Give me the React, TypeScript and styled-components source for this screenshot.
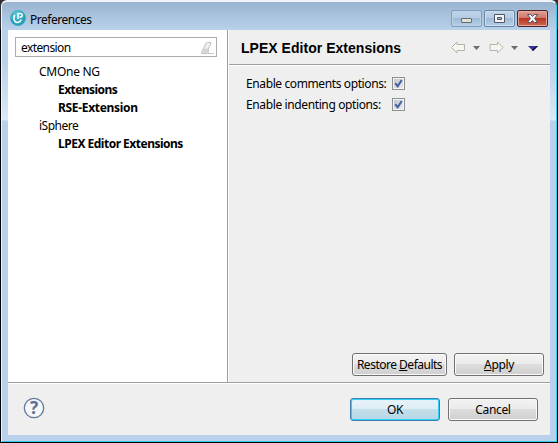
import React from 'react';
import styled, { createGlobalStyle, css } from 'styled-components';

const GlobalStyle = createGlobalStyle`
  * { box-sizing: border-box; }
  html, body { margin: 0; padding: 0; background: #000; overflow: hidden; }
  body { font-family: "Noto Sans", "Open Sans", sans-serif; font-size: 12px; color: #000; }
  button, input { font: inherit; color: inherit; }
`;

const Desktop = styled.div`
  width: 558px;
  height: 443px;
  padding: 0 1px 1px;
  background: linear-gradient(#333038 0, #333038 28px, #000 30px);
`;

const WindowFrame = styled.div`
  display: flex;
  flex-direction: column;
  width: 556px;
  height: 442px;
  padding: 0 6px 6px;
  border: 1px solid #f4f8fc;
  border-top: 2px solid #f0f5fa;
  border-right-color: #30cbe8;
  border-bottom-color: #30cbe8;
  border-radius: 6px 6px 0 0;
  background: linear-gradient(#99b4d1 0, #b9d1ea 28px, #b9d1ea 60px, #dce9f6 118px, #b9d1ea 119px);
`;

const TitleBar = styled.header`
  display: flex;
  flex: none;
  align-items: flex-start;
  height: 28px;
  padding: 8px 2px 0 2px;
`;

const AppIcon = styled.svg`
  width: 16px;
  height: 16px;
  margin-right: 4px;
`;

const Label = styled.span<{ $spacing?: number; $bold?: boolean }>`
  line-height: 18px;
  white-space: pre;
  letter-spacing: ${p => p.$spacing ?? -0.35}px;
  font-weight: ${p => (p.$bold ? 700 : 400)};
`;

const WindowTitle = styled(Label)`
  padding-top: 1px;
`;

const WindowControls = styled.div`
  display: flex;
  gap: 2px;
  margin-left: auto;
`;

const ControlButton = styled.button<{ $kind: 'minimize' | 'maximize' | 'close' }>`
  display: grid;
  place-items: center;
  width: 31px;
  height: 17px;
  padding: 0;
  border-radius: 2px;
  border: 1px solid #6c83a3;
  background: linear-gradient(#c0d5e9 0, #b4cce4 45%, #9dbad7 50%, #b4d0e9 100%);
  box-shadow: inset 0 0 0 1px #cbdff0;
  ${p => p.$kind === 'minimize' && css`border-color: #849fbe; box-shadow: inset 0 0 0 1px #b8cee4;`}
  ${p => p.$kind === 'close' && css`
    border-color: #4c2331;
    background: linear-gradient(#dda096 0, #cf7869 45%, #b93624 50%, #cc694d 100%);
    box-shadow: inset 0 0 0 1px #e5a89b;
  `}
  svg { display: block; }
`;

const Client = styled.main`
  display: flex;
  flex: 1;
  flex-direction: column;
  min-height: 0;
  background: #efefef;
`;

const Body = styled.div`
  display: flex;
  flex: none;
  height: 353px;
  border-bottom: 1px solid #a0a0a0;
`;

const Navigation = styled.aside`
  width: 220px;
  padding: 7px 10px 0 7px;
  background: #fff;
  border-right: 1px solid #a0a0a0;
`;

const Filter = styled.div`
  display: flex;
  align-items: center;
  width: 202px;
  height: 20px;
  padding: 1px 2px 0 5px;
  border: 1px solid #abadb3;
  svg { margin-left: auto; }
`;

const Tree = styled.div`
  display: flex;
  flex-direction: column;
  padding-top: 6px;
`;

const TreeItem = styled.div<{ $nested?: boolean }>`
  display: flex;
  height: 18px;
  padding-left: ${p => (p.$nested ? 43 : 24)}px;
`;

const Page = styled.section`
  display: flex;
  flex: 1;
  flex-direction: column;
  border-left: 1px solid #fff;
`;

const PageHeader = styled.div`
  display: flex;
  align-items: center;
  height: 36px;
  padding: 0 12px 0 12px;
  border-bottom: 1px solid #fff;
  box-shadow: inset 0 -1px #a0a0a0;
`;

const PageTitle = styled.h1`
  margin: 0;
  padding-top: 2px;
  font: bold 14px/21px "Liberation Sans", Arial, sans-serif;
  letter-spacing: 0.03px;
  white-space: nowrap;
`;

const HistoryIcons = styled.svg`
  width: 90px;
  height: 13px;
  margin-left: auto;
`;

const Options = styled.div`
  display: grid;
  grid-template-columns: 146px 13px;
  grid-auto-rows: 18px;
  row-gap: 3px;
  align-items: center;
  padding: 9px 0 0 17px;
`;

const Checkbox = styled.button`
  width: 13px;
  height: 13px;
  margin-top: -1px;
  padding: 1px;
  border: 1px solid #8e8f8f;
  background: linear-gradient(135deg, #bcc3cc, #eceef0);
  box-shadow: inset 0 0 0 1px #f4f4f4;
  svg { display: block; }
`;

const Actions = styled.div`
  display: flex;
  gap: 7px;
  justify-content: flex-end;
  margin-top: auto;
  padding: 0 6px 6px 0;
`;

const PushButton = styled.button<{ $width?: number; $primary?: boolean }>`
  width: ${p => p.$width ?? 90}px;
  height: 23px;
  padding: 0;
  border: 1px solid #707070;
  border-radius: 3px;
  background: linear-gradient(#f2f2f2 0, #ebebeb 48%, #dddddd 50%, #cfcfcf 100%);
  box-shadow: inset 0 0 0 1px #fafafa;
  display: flex;
  align-items: center;
  justify-content: center;
  u { text-underline-offset: 1px; text-decoration-thickness: 1px; }
  ${p => p.$primary && css`
    border-color: #3c7fb1;
    background: linear-gradient(#eaf4f9 0, #dceef6 48%, #c5dfea 50%, #b6d6e4 100%);
    box-shadow: inset 0 0 0 1px #32cff4, inset 0 0 1px 1px #9de5f7;
  `}
`;

const Footer = styled.footer`
  display: flex;
  flex: 1;
  align-items: flex-start;
  gap: 8px;
  padding: 14px 12px 0 15px;
  border-top: 1px solid #fff;
`;

const HelpIcon = styled.svg`
  width: 22px;
  height: 22px;
  margin-top: -1px;
  margin-right: auto;
  text { font: bold 17px "Noto Sans", sans-serif; }
`;

const tree = [
  { name: 'CMOne NG', spacing: -0.28 },
  { name: 'Extensions', nested: true, spacing: -0.56 },
  { name: 'RSE-Extension', nested: true, spacing: -0.32 },
  { name: 'iSphere', spacing: -0.48 },
  { name: 'LPEX Editor Extensions', nested: true, spacing: -0.5 },
];

function Check() {
  return (
    <Checkbox role="checkbox" aria-checked="true">
      <svg width="9" height="9" viewBox="0 0 9 9">
        <path d="M1.2 4.2 3.7 7.2 7.7 1" fill="none" stroke="#4560a0" strokeWidth="2" />
      </svg>
    </Checkbox>
  );
}

export default function App() {
  return (
    <>
      <GlobalStyle />
      <Desktop>
        <WindowFrame>
          <TitleBar>
            <AppIcon viewBox="0 0 16 16">
              <defs>
                <radialGradient id="orb" cx=".4" cy=".25">
                  <stop stopColor="#59c7d5" /><stop offset="1" stopColor="#2aa3ba" />
                </radialGradient>
              </defs>
              <circle cx="8" cy="8" r="7.9" fill="url(#orb)" />
              <path d="M4.9 5C3.7 6.8 3.7 9.6 4.9 11.2c1.6 2 5.2 1.6 6.4-1.7M8 9V3.5h2.6c2.3 0 2.3 3.5 0 3.5H9.4" fill="none" stroke="#fff" strokeWidth="1.5" />
            </AppIcon>
            <WindowTitle $spacing={-0.47}>Preferences</WindowTitle>
            <WindowControls>
              <ControlButton $kind="minimize" aria-label="Minimize">
                <svg width="13" height="11" viewBox="0 0 13 11"><rect x="1.5" y="5.5" width="10" height="4" rx=".5" fill="#e1e1d8" stroke="#656970" /></svg>
              </ControlButton>
              <ControlButton $kind="maximize" aria-label="Maximize">
                <svg width="13" height="11" viewBox="0 0 13 11"><path d="M1.5 1.5h10v8h-10z" fill="#f5f5f4" stroke="#51566a" /><path d="M4.5 4.5h4v2h-4z" fill="#94b6d7" stroke="#51566a" /></svg>
              </ControlButton>
              <ControlButton $kind="close" aria-label="Close">
                <svg width="13" height="11" viewBox="0 0 13 11"><path d="M1.5 1.5h3l2 2 2-2h3L8.6 5.5l2.9 4h-3l-2-2-2 2h-3l2.9-4z" fill="#f7f7f7" stroke="#51536b" /></svg>
              </ControlButton>
            </WindowControls>
          </TitleBar>
          <Client>
            <Body>
              <Navigation>
                <Filter>
                  <Label $spacing={-0.6}>extension</Label>
                  <svg width="14" height="14" viewBox="0 0 14 14"><path d="M3.5 7.5 6 2.5q.4-1 1.4-1H10q1.5 0 1 1L8.2 8v3.5q-.5 1-1.5 1H2.5q-1.5 0-1-1z" fill="#f1f1ef" stroke="#bdbdbb" /><path d="M3 7.5h5v4.2H2z" fill="#d4d4d2" /><path d="M8 12.5h6" stroke="#c7c7c7" /></svg>
                </Filter>
                <Tree>
                  {tree.map(item => (
                    <TreeItem key={item.name} $nested={item.nested}>
                      <Label $bold={item.nested} $spacing={item.spacing}>{item.name}</Label>
                    </TreeItem>
                  ))}
                </Tree>
              </Navigation>
              <Page>
                <PageHeader>
                  <PageTitle>LPEX Editor Extensions</PageTitle>
                  <HistoryIcons viewBox="0 0 90 13">
                    <g fill="#f7f6ee" stroke="#b5b4ac">
                      <path d="M3.5 6.5 9 1v2.5h7.5v6H9V12z" />
                      <path d="M55 6.5 49.5 1v2.5H42v6h7.5V12z" />
                    </g>
                    <path d="M25 5h7l-3.5 4zM63 5h7l-3.5 4z" fill="#6c6c6c" />
                    <path d="M80 5h10l-5 5z" fill="#34309a" /><path d="m84 9 5-4h1l-5 5z" fill="#090915" />
                  </HistoryIcons>
                </PageHeader>
                <Options>
                  <Label $spacing={-0.39}>Enable comments options:</Label><Check />
                  <Label $spacing={-0.38}>Enable indenting options:</Label><Check />
                </Options>
                <Actions>
                  <PushButton $width={95}><Label $spacing={-0.5}>Restore <u>D</u>efaults</Label></PushButton>
                  <PushButton><Label><u>A</u>pply</Label></PushButton>
                </Actions>
              </Page>
            </Body>
            <Footer>
              <HelpIcon viewBox="0 0 22 22">
                <circle cx="11" cy="11" r="9.7" fill="#f5f6f8" stroke="#64799b" strokeWidth="1.3" />
                <text x="11" y="17" textAnchor="middle" fill="#596f98">?</text>
              </HelpIcon>
              <PushButton $primary><Label>OK</Label></PushButton>
              <PushButton><Label>Cancel</Label></PushButton>
            </Footer>
          </Client>
        </WindowFrame>
      </Desktop>
    </>
  );
}
